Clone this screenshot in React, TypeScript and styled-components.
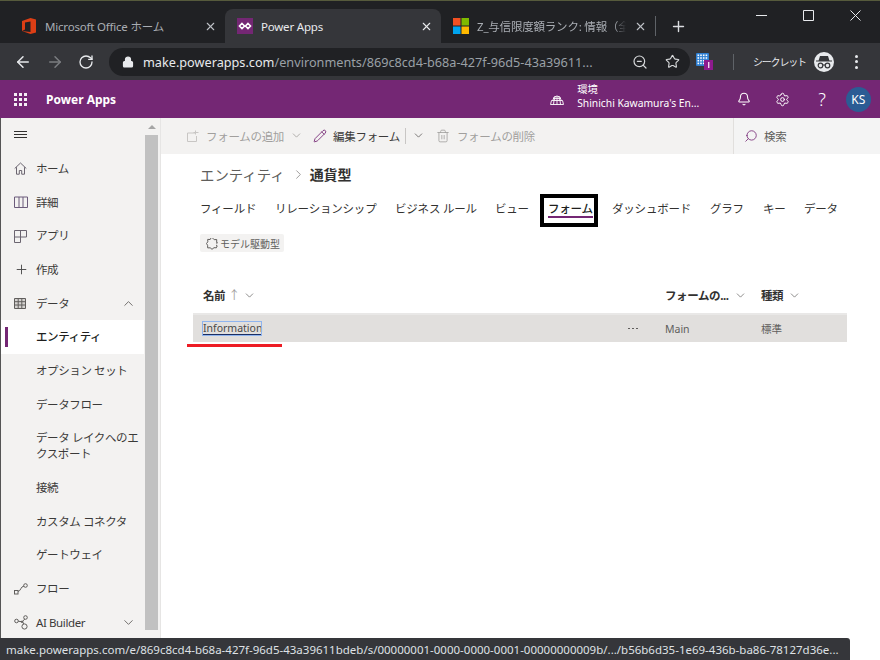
import React from "react";
import styled, { createGlobalStyle } from "styled-components";
import {
  ArrowLeft,
  ArrowRight,
  Bell,
  ChevronDown,
  ChevronRight,
  ChevronUp,
  Lock,
  Pencil,
  Plus,
  RotateCw,
  Search,
  Settings,
  Star,
  Trash2,
  X,
  ZoomOut,
} from "lucide-react";

const PURPLE = "#742774";
const FONT = `"Noto Sans", "Noto Sans CJK JP", sans-serif`;

const GlobalStyle = createGlobalStyle`
  html, body {
    margin: 0;
    padding: 0;
    height: 100%;
    overflow: hidden;
    background: #fff;
  }
  * { box-sizing: border-box; }
  #root { height: 100%; font-family: ${FONT}; }
`;

const Page = styled.div`
  position: relative;
  width: 880px;
  height: 660px;
  display: flex;
  flex-direction: column;
  overflow: hidden;
`;

/* browser chrome */
const TabStrip = styled.div`
  height: 43px;
  flex: none;
  display: flex;
  align-items: flex-end;
  background: #202124;
  border-top: 1px solid #565a3c;
  padding-left: 1px;
`;

const Tab = styled.div<{ $active?: boolean; $w: number; $pad: number }>`
  width: ${(p) => p.$w}px;
  height: 34px;
  flex: none;
  display: flex;
  align-items: center;
  padding-left: ${(p) => p.$pad}px;
  padding-right: 8px;
  gap: 8px;
  border-radius: 8px 8px 0 0;
  background: ${(p) => (p.$active ? "#35363a" : "transparent")};
  color: ${(p) => (p.$active ? "#e8eaed" : "#a9adb3")};
  font-size: 11.5px;
  letter-spacing: -0.2px;
`;

const TabTitle = styled.span<{ $fade?: boolean }>`
  flex: 1;
  min-width: 0;
  white-space: nowrap;
  ${(p) =>
    p.$fade &&
    "-webkit-mask-image: linear-gradient(90deg, #000 92%, transparent 100%);"}
`;

const TabClose = styled.span<{ $active?: boolean }>`
  display: flex;
  color: ${(p) => (p.$active ? "#e8eaed" : "#bdc1c6")};
`;

const TabSeparator = styled.div`
  width: 1px;
  height: 20px;
  margin: 0 0 7px 0;
  background: #5f6368;
`;

const NewTab = styled.div`
  display: flex;
  margin: 0 0 8px 14px;
  color: #dadce0;
`;

const WindowControls = styled.div`
  margin-left: auto;
  align-self: flex-start;
  display: flex;
  padding: 9px 19px 0 0;
  gap: 36px;
`;

const Toolbar = styled.div`
  height: 37px;
  flex: none;
  display: flex;
  align-items: center;
  background: #35363a;
  padding-left: 14px;
  color: #dadce0;
`;

const NavButton = styled.div<{ $off?: boolean }>`
  width: 32px;
  display: flex;
  color: ${(p) => (p.$off ? "#7b7d80" : "#e8eaed")};
`;

const Omnibox = styled.div`
  width: 581px;
  height: 28px;
  margin-left: -1px;
  display: flex;
  align-items: center;
  padding: 0 10px 0 13px;
  border-radius: 14px;
  background: #202124;
  font-size: 12.7px;
  color: #9aa0a6;
`;

const Url = styled.div`
  flex: 1;
  margin-left: 9px;
  white-space: nowrap;
  b {
    font-weight: 400;
    color: #e8eaed;
  }
`;

const OmniIcon = styled.span<{ $gap: number }>`
  display: flex;
  margin-left: ${(p) => p.$gap}px;
  color: #d6d8da;
`;

const ExtSeparator = styled.div`
  width: 1px;
  height: 16px;
  margin-left: 19px;
  background: #5f6368;
`;

const Incognito = styled.span`
  margin-left: 19px;
  font-size: 10px;
  letter-spacing: -1.2px;
  color: #e8eaed;
  white-space: nowrap;
`;

const IncognitoBadge = styled.span`
  width: 20px;
  height: 20px;
  margin-left: 8px;
  display: flex;
  align-items: center;
  justify-content: center;
  border-radius: 50%;
  background: #e8eaed;
`;

const Kebab = styled.div`
  margin-left: 21px;
  display: flex;
  flex-direction: column;
  gap: 2.5px;
  span {
    width: 3px;
    height: 3px;
    border-radius: 50%;
    background: #e8eaed;
  }
`;

/* power apps header */
const AppBar = styled.header`
  height: 38px;
  flex: none;
  display: flex;
  align-items: center;
  padding-left: 14px;
  background: ${PURPLE};
  color: #fff;
`;

const Waffle = styled.div`
  display: grid;
  grid-template-columns: repeat(3, 3px);
  gap: 2px;
  span {
    width: 3px;
    height: 3px;
    background: #fff;
    opacity: 0.92;
  }
`;

const AppName = styled.div`
  margin-left: 19px;
  font-size: 12px;
  font-weight: 700;
`;

const EnvIcon = styled.span`
  display: flex;
  margin-left: 434px;
`;

const EnvBlock = styled.div`
  width: 150px;
  margin-left: 13px;
  font-size: 10.3px;
  line-height: 14px;
  white-space: nowrap;
  padding-bottom: 7px;
`;

const BarIcon = styled.span<{ $gap: number }>`
  display: flex;
  margin-left: ${(p) => p.$gap}px;
  font-size: 18px;
  font-weight: 300;
`;

const Avatar = styled.div`
  width: 25px;
  height: 25px;
  margin-left: 20px;
  display: flex;
  align-items: center;
  justify-content: center;
  border-radius: 50%;
  background: #2b5c94;
  font-size: 12px;
`;

/* body */
const Body = styled.div`
  flex: 1;
  min-height: 0;
  display: flex;
  border-left: 1px solid #555;
`;

const Sidebar = styled.aside`
  width: 160px;
  flex: none;
  display: flex;
  background: #f3f2f1;
  border-right: 1px solid #e6e5e4;
`;

const NavList = styled.nav`
  width: 143px;
  flex: none;
  display: flex;
  flex-direction: column;
  padding-top: 13px;
  font-size: 11.5px;
  letter-spacing: -0.4px;
  color: #323130;
`;

const Hamburger = styled.div`
  height: 21px;
  padding-left: 13px;
  display: flex;
  flex-direction: column;
  gap: 2px;
  span {
    width: 13px;
    height: 1px;
    background: #323130;
  }
`;

const NavRow = styled.div<{ $active?: boolean; $sub?: boolean }>`
  position: relative;
  flex: none;
  display: flex;
  align-items: center;
  padding: 8.85px 1px 8.85px ${(p) => (p.$sub ? "35px" : "13px")};
  background: ${(p) => (p.$active ? "#fff" : "transparent")};
  color: ${(p) => (p.$active ? "#201f1e" : "#3b3a39")};
  font-weight: ${(p) => (p.$active ? 500 : 400)};
  line-height: 16px;
  word-break: break-all;
  ${(p) =>
    p.$active &&
    `&::before {
      content: "";
      position: absolute;
      left: 4px;
      top: 7px;
      width: 3px;
      height: 20px;
      background: ${PURPLE};
    }`}
`;

const NavIcon = styled.span`
  width: 22px;
  height: 16px;
  flex: none;
  display: flex;
  align-items: center;
  color: #605e5c;
`;

const NavChevron = styled.span`
  margin-left: auto;
  padding-right: 7px;
  display: flex;
  color: #605e5c;
`;

const Scrollbar = styled.div`
  width: 13px;
  margin-left: 1px;
  display: flex;
  flex-direction: column;
  align-items: center;
  padding-top: 7px;
`;

const ScrollArrow = styled.div`
  width: 0;
  height: 0;
  border-left: 4px solid transparent;
  border-right: 4px solid transparent;
  border-bottom: 4px solid #a5a5a5;
`;

const ScrollThumb = styled.div`
  width: 13px;
  height: 495px;
  margin-top: 6px;
  background: #c1c1c1;
`;

/* main */
const Main = styled.main`
  flex: 1;
  min-width: 0;
  display: flex;
  flex-direction: column;
`;

const CommandBar = styled.div`
  height: 36px;
  flex: none;
  display: flex;
  align-items: center;
  background: #f3f2f1;
  font-size: 11.5px;
  letter-spacing: -0.3px;
  color: #a19f9d;
  padding-left: 26px;
`;

const Command = styled.span<{ $gap?: number; $on?: boolean }>`
  display: flex;
  align-items: center;
  margin-left: ${(p) => p.$gap ?? 0}px;
  padding-bottom: 1px;
  color: ${(p) => (p.$on ? "#3b3a39" : "#a19f9d")};
  white-space: nowrap;
`;

const CommandSeparator = styled.div`
  width: 1px;
  height: 16px;
  margin-left: 5px;
  background: #c8c6c4;
`;

const SearchBox = styled.div`
  margin-left: auto;
  width: 147px;
  height: 36px;
  display: flex;
  align-items: center;
  gap: 6px;
  padding-left: 10px;
  padding-bottom: 1px;
  background: #f4f4f4;
  border-left: 1px solid #e1dfdd;
  color: #605e5c;
  font-size: 11.5px;
`;

const Content = styled.div`
  flex: 1;
  position: relative;
  padding: 0 33px 0 32px;
  background: #fff;
`;

const Breadcrumb = styled.div`
  height: 26px;
  margin: 7px 0 0 7px;
  display: flex;
  align-items: center;
  font-size: 14.4px;
  color: #605e5c;
  b {
    font-size: 14px;
    font-weight: 700;
    color: #323130;
  }
`;

const Crumb = styled.span`
  display: flex;
  margin: 0 4px 0 6px;
  color: #8a8886;
`;

const TabRow = styled.div`
  height: 33px;
  margin: 7px 0 0 7px;
  display: flex;
  align-items: center;
  font-size: 11.5px;
  letter-spacing: -0.2px;
  color: #323130;
  white-space: nowrap;
`;

const EntityTab = styled.div<{ $x: number; $w: number; $current?: boolean }>`
  width: ${(p) => p.$w}px;
  margin-left: ${(p) => p.$x}px;
  position: relative;
  flex: none;
  height: 33px;
  line-height: 30px;
  ${(p) =>
    p.$current &&
    `
    width: 58px;
    padding-left: 4px;
    border: 4px solid #000;
    line-height: 21px;
    color: #201f1e;
    font-weight: 500;
    &::after {
      content: "";
      position: absolute;
      left: 4px;
      width: 45px;
      top: 18px;
      height: 2px;
      background: ${PURPLE};
    }
  `}
`;

const Tag = styled.div`
  width: 84px;
  height: 18px;
  margin: 7px 0 0 7px;
  display: flex;
  align-items: center;
  gap: 2px;
  padding-left: 6px;
  border-radius: 2px;
  background: #f3f2f1;
  font-size: 10px;
  color: #605e5c;
  white-space: nowrap;
`;

const ListHeader = styled.div`
  height: 36px;
  margin-top: 25px;
  padding: 0 0 0 10px;
  display: grid;
  grid-template-columns: 462px 96px 1fr;
  align-items: center;
  font-size: 11.5px;
  letter-spacing: -0.4px;
  font-weight: 700;
  color: #323130;
`;

const HeaderCell = styled.div<{ $tight?: boolean }>`
  display: flex;
  align-items: center;
  gap: ${(p) => (p.$tight ? 3 : 5)}px;
  white-space: nowrap;
  svg {
    color: #605e5c;
  }
`;

const SortArrow = styled.span`
  color: #a19f9d;
  font-weight: 400;
  font-size: 12px;
`;

const ListRow = styled.div`
  height: 29px;
  padding-left: 10px;
  display: grid;
  grid-template-columns: 420px 42px 96px 1fr;
  align-items: center;
  background: #e1dfdd;
  border-top: 2px solid #e9e8e7;
  font-size: 10.5px;
  color: #605e5c;
`;

const NameLink = styled.div`
  width: 58px;
  height: 13px;
  line-height: 12px;
  outline: 1px solid #8fb4ee;
  border-bottom: 1px solid #1c2f63;
  color: #4a4948;
  white-space: nowrap;
`;

const More = styled.div`
  display: flex;
  gap: 2.5px;
  padding-left: 5px;
  span {
    width: 1.5px;
    height: 1.5px;
    background: #605e5c;
  }
`;

const RedMark = styled.div`
  position: absolute;
  left: 26px;
  top: 190px;
  width: 95px;
  height: 3px;
  background: #ed1c24;
`;

const StatusBubble = styled.div`
  position: absolute;
  left: 0;
  bottom: 0;
  width: 850px;
  height: 22px;
  padding-left: 6px;
  display: flex;
  align-items: center;
  border-radius: 0 3px 0 0;
  background: #35363a;
  color: #dfe1e5;
  font-size: 11.5px;
  white-space: nowrap;
`;

function OfficeIcon() {
  return (
    <svg width="14" height="16" viewBox="0 0 14 16">
      <path d="M0 3 8.5 0 14 1.6v12.8L8.5 16 0 13l8.5 1V3.4L3 4.6v6.8L0 13z" fill="#dc3e15" />
    </svg>
  );
}

function PowerAppsIcon() {
  return (
    <svg width="16" height="16" viewBox="0 0 16 16">
      <rect width="16" height="16" fill={PURPLE} />
      <path d="M5 5.5 7.5 8 5 10.5 2.5 8zM11 5.5 13.5 8 11 10.5 8.5 8z" fill="none" stroke="#fff" strokeWidth="1.6" />
    </svg>
  );
}

function MicrosoftIcon() {
  return (
    <svg width="16" height="16" viewBox="0 0 16 16">
      <rect width="7.5" height="7.5" fill="#f25022" />
      <rect x="8.5" width="7.5" height="7.5" fill="#7fba00" />
      <rect y="8.5" width="7.5" height="7.5" fill="#00a4ef" />
      <rect x="8.5" y="8.5" width="7.5" height="7.5" fill="#ffb900" />
    </svg>
  );
}

function WindowIcon({ d }: { d: string }) {
  return (
    <svg width="11" height="11" viewBox="0 0 11 11" fill="none" stroke="#e8eaed" strokeWidth="1">
      <path d={d} />
    </svg>
  );
}

function ExtensionIcon() {
  const cells = [0, 1, 2, 3];
  return (
    <svg width="18" height="17" viewBox="0 0 18 17">
      <rect width="13" height="13" rx="1" fill="#2f7fd1" />
      {cells.map((r) =>
        cells.map((c) => (
          <rect key={`${r}-${c}`} x={1.5 + c * 2.7} y={1.5 + r * 2.7} width="1.6" height="1.6" fill="#fff" />
        )),
      )}
      <rect x="8" y="7" width="9" height="10" fill="#8e1a8e" />
      <rect x="12" y="9" width="1.4" height="6" fill="#f0d5f0" />
    </svg>
  );
}

function SpyIcon() {
  return (
    <svg width="16" height="14" viewBox="0 0 16 14">
      <path d="M4 1h8l1.4 4.5H16v1H0v-1h2.6z" fill="#35363a" />
      <circle cx="4.5" cy="10.5" r="2.3" fill="none" stroke="#35363a" strokeWidth="1.2" />
      <circle cx="11.5" cy="10.5" r="2.3" fill="none" stroke="#35363a" strokeWidth="1.2" />
      <path d="M6.8 10h2.4" stroke="#35363a" strokeWidth="1.1" />
    </svg>
  );
}

function EnvironmentIcon() {
  return (
    <svg width="14" height="14" viewBox="0 0 14 14" fill="none" stroke="#fff" strokeWidth="0.9">
      <path d="M3 8a4 4 0 0 1 8 0M7 4v4M5 4.6 4.6 8M9 4.6 9.4 8M3.2 6.4h7.6" />
      <path d="M1.5 8.5h11l1 4H.5zM7 8.5v4M4 8.5l-.5 4M10 8.5l.5 4" />
    </svg>
  );
}

function BookIcon() {
  return (
    <svg width="14" height="13" viewBox="0 0 14 13" fill="none" stroke="#6b5b7b" strokeWidth="1">
      <path d="M.5 1h13v10.5H.5zM5 1v10.5M9 1v10.5" />
    </svg>
  );
}

function AppsIcon() {
  return (
    <svg width="13" height="13" viewBox="0 0 13 13" fill="none" stroke="#6b6570" strokeWidth="1">
      <path d="M.5.5h12v6.5h-12M.5.5v12h6v-12" />
    </svg>
  );
}

function TableIcon() {
  return (
    <svg width="12" height="11" viewBox="0 0 12 11" fill="#d5d3d1" stroke="#605e5c" strokeWidth="1">
      <path d="M.5.5h11v10H.5zM.5 3.7h11M.5 7h11M4.2.5v10M7.8.5v10" />
    </svg>
  );
}

function FlowIcon() {
  return (
    <svg width="14" height="12" viewBox="0 0 14 12" fill="none" stroke="#605e5c" strokeWidth="1">
      <rect x=".5" y="7.5" width="3.5" height="3.5" />
      <path d="M4 8.5C7 8 6.5 3.5 10 3" />
      <circle cx="11.5" cy="2.5" r="1.8" />
    </svg>
  );
}

function BuilderIcon() {
  return (
    <svg width="15" height="15" viewBox="0 0 15 15" fill="none" stroke="#605e5c" strokeWidth="1">
      <circle cx="2.5" cy="6" r="1.8" />
      <circle cx="11.5" cy="2.5" r="1.8" />
      <circle cx="10.5" cy="11.5" r="2.6" />
      <path d="M4.3 6.2 8 6.8M10.8 4.2 8.5 6.2 9.6 9" />
      <circle cx="8" cy="6.8" r=".8" />
    </svg>
  );
}

function AddFormIcon() {
  return (
    <svg width="13" height="12" viewBox="0 0 13 12" fill="none" stroke="#c8c6c4" strokeWidth="1">
      <path d="M8 3H.5v8.5h9V6M8.5.5v4M6.5 2.5h5" />
    </svg>
  );
}

function PuzzleIcon() {
  return (
    <svg width="12" height="13" viewBox="0 0 12 13" fill="none" stroke="#605e5c" strokeWidth="1">
      <path d="M6.5 1 8.2 2.7l2.5-.2v2.6L11.5 6H10M10 8l1.2.8-.8 2-2.4-.1L6 12.3 4.2 10.8l-2.5.1-.1-2.6L.5 6.5l1.3-1.7-.1-2.4 2.5.1L5 1" />
    </svg>
  );
}

const NAV_GROUP = ["エンティティ", "オプション セット", "データフロー", "データ レイクへのエクスポート", "接続", "カスタム コネクタ", "ゲートウェイ"];

export default function App() {
  return (
    <Page>
      <GlobalStyle />
      <TabStrip>
        <Tab $w={224} $pad={21}>
          <OfficeIcon />
          <TabTitle style={{ marginLeft: 1 }}>Microsoft Office ホーム</TabTitle>
          <TabClose>
            <X size={13} strokeWidth={2} />
          </TabClose>
        </Tab>
        <Tab $active $w={216} $pad={12}>
          <PowerAppsIcon />
          <TabTitle>Power Apps</TabTitle>
          <TabClose $active>
            <X size={13} strokeWidth={2} />
          </TabClose>
        </Tab>
        <Tab $w={214} $pad={12}>
          <MicrosoftIcon />
          <TabTitle $fade>Z_与信限度額ランク: 情報（全</TabTitle>
          <TabClose>
            <X size={13} strokeWidth={2} />
          </TabClose>
        </Tab>
        <TabSeparator />
        <NewTab>
          <Plus size={17} strokeWidth={2} />
        </NewTab>
        <WindowControls>
          <WindowIcon d="M0 5.5h11" />
          <WindowIcon d="M.5.5h10v10H.5z" />
          <WindowIcon d="M.5.5l10 10M10.5.5l-10 10" />
        </WindowControls>
      </TabStrip>

      <Toolbar>
        <NavButton>
          <ArrowLeft size={18} strokeWidth={2} />
        </NavButton>
        <NavButton $off>
          <ArrowRight size={18} strokeWidth={2} />
        </NavButton>
        <NavButton>
          <RotateCw size={16} strokeWidth={2} />
        </NavButton>
        <Omnibox>
          <Lock size={12} strokeWidth={2.4} color="#e8eaed" fill="#e8eaed" />
          <Url>
            <b>make.powerapps.com</b>/environments/869c8cd4-b68a-427f-96d5-43a39611...
          </Url>
          <OmniIcon $gap={8}>
            <ZoomOut size={16} strokeWidth={1.8} />
          </OmniIcon>
          <OmniIcon $gap={17}>
            <Star size={15} strokeWidth={1.8} />
          </OmniIcon>
        </Omnibox>
        <OmniIcon $gap={6}>
          <ExtensionIcon />
        </OmniIcon>
        <ExtSeparator />
        <Incognito>シークレット</Incognito>
        <IncognitoBadge>
          <SpyIcon />
        </IncognitoBadge>
        <Kebab>
          <span />
          <span />
          <span />
        </Kebab>
      </Toolbar>

      <AppBar>
        <Waffle>
          {Array.from({ length: 9 }, (_, i) => (
            <span key={i} />
          ))}
        </Waffle>
        <AppName>Power Apps</AppName>
        <EnvIcon>
          <EnvironmentIcon />
        </EnvIcon>
        <EnvBlock>
          環境
          <br />
          Shinichi Kawamura's En...
        </EnvBlock>
        <BarIcon $gap={10}>
          <Bell size={14} strokeWidth={1.8} />
        </BarIcon>
        <BarIcon $gap={24}>
          <Settings size={15} strokeWidth={1.6} />
        </BarIcon>
        <BarIcon $gap={28}>?</BarIcon>
        <Avatar>KS</Avatar>
      </AppBar>

      <Body>
        <Sidebar>
          <NavList>
            <Hamburger>
              <span />
              <span />
              <span />
            </Hamburger>
            <NavRow>
              <NavIcon>
                <svg width="13" height="13" viewBox="0 0 13 13" fill="none" stroke="#6b6570" strokeWidth="1">
                  <path d="M.7 6.5 6.5 1l5.8 5.5M2.5 5.2v7h2.8V8.5h2.4v3.7h2.8v-7" />
                </svg>
              </NavIcon>
              ホーム
            </NavRow>
            <NavRow>
              <NavIcon>
                <BookIcon />
              </NavIcon>
              詳細
            </NavRow>
            <NavRow>
              <NavIcon>
                <AppsIcon />
              </NavIcon>
              アプリ
            </NavRow>
            <NavRow>
              <NavIcon>
                <Plus size={15} strokeWidth={1.5} color="#4a4a4a" />
              </NavIcon>
              作成
            </NavRow>
            <NavRow>
              <NavIcon>
                <TableIcon />
              </NavIcon>
              データ
              <NavChevron>
                <ChevronUp size={15} strokeWidth={1.4} />
              </NavChevron>
            </NavRow>
            {NAV_GROUP.map((label, i) => (
              <NavRow key={label} $sub $active={i === 0}>
                {label}
              </NavRow>
            ))}
            <NavRow>
              <NavIcon>
                <FlowIcon />
              </NavIcon>
              フロー
            </NavRow>
            <NavRow>
              <NavIcon>
                <BuilderIcon />
              </NavIcon>
              AI Builder
              <NavChevron>
                <ChevronDown size={15} strokeWidth={1.4} />
              </NavChevron>
            </NavRow>
          </NavList>
          <Scrollbar>
            <ScrollArrow />
            <ScrollThumb />
          </Scrollbar>
        </Sidebar>

        <Main>
          <CommandBar>
            <AddFormIcon />
            <Command $gap={6}>フォームの追加</Command>
            <Command $gap={6}>
              <ChevronDown size={13} strokeWidth={1.5} />
            </Command>
            <Command $gap={10} $on>
              <Pencil size={14} strokeWidth={1.5} color={PURPLE} />
            </Command>
            <Command $gap={6} $on>
              編集フォーム
            </Command>
            <CommandSeparator />
            <Command $gap={6}>
              <ChevronDown size={13} strokeWidth={1.5} color="#605e5c" />
            </Command>
            <Command $gap={11}>
              <Trash2 size={14} strokeWidth={1.4} />
            </Command>
            <Command $gap={7}>フォームの削除</Command>
            <SearchBox>
              <Search size={14} strokeWidth={1.4} color={PURPLE} style={{ transform: "scaleX(-1)" }} />
              検索
            </SearchBox>
          </CommandBar>
          <Content>
            <Breadcrumb>
              エンティティ
              <Crumb>
                <ChevronRight size={15} strokeWidth={1.3} />
              </Crumb>
              <b>通貨型</b>
            </Breadcrumb>
            <TabRow>
              <EntityTab $x={0} $w={56}>フィールド</EntityTab>
              <EntityTab $x={19} $w={101}>リレーションシップ</EntityTab>
              <EntityTab $x={19} $w={81}>ビジネス ルール</EntityTab>
              <EntityTab $x={19} $w={26}>ビュー</EntityTab>
              <EntityTab $x={19} $w={58} $current>フォーム</EntityTab>
              <EntityTab $x={14} $w={78}>ダッシュボード</EntityTab>
              <EntityTab $x={20} $w={33}>グラフ</EntityTab>
              <EntityTab $x={20} $w={21}>キー</EntityTab>
              <EntityTab $x={20} $w={34}>データ</EntityTab>
            </TabRow>
            <Tag>
              <PuzzleIcon />
              モデル駆動型
            </Tag>
            <ListHeader>
              <HeaderCell $tight>
                名前
                <SortArrow>↑</SortArrow>
                <ChevronDown size={13} strokeWidth={1.3} />
              </HeaderCell>
              <HeaderCell>
                フォームの...
                <ChevronDown size={13} strokeWidth={1.3} />
              </HeaderCell>
              <HeaderCell>
                種類
                <ChevronDown size={13} strokeWidth={1.3} />
              </HeaderCell>
            </ListHeader>
            <ListRow>
              <NameLink>Information</NameLink>
              <More>
                <span />
                <span />
                <span />
              </More>
              <div>Main</div>
              <div>標準</div>
            </ListRow>
            <RedMark />
          </Content>
        </Main>
      </Body>
      <StatusBubble>
        make.powerapps.com/e/869c8cd4-b68a-427f-96d5-43a39611bdeb/s/00000001-0000-0000-0001-00000000009b/.../b56b6d35-1e69-436b-ba86-78127d36e...
      </StatusBubble>
    </Page>
  );
}
